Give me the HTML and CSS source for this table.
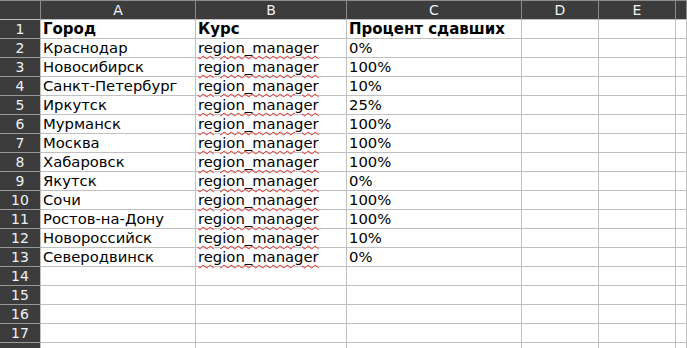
FILE: index.html
```html
<!DOCTYPE html>
<html lang="ru">
<head>
<meta charset="utf-8">
<title>Sheet</title>
<link rel="stylesheet" href="styles.css">
</head>
<body>
<div class="sheet">
  <div class="corner"></div>
  <div class="colhead">A</div>
  <div class="colhead">B</div>
  <div class="colhead">C</div>
  <div class="colhead">D</div>
  <div class="colhead">E</div>
  <div class="colhead"></div>

  <div class="rowhead">1</div><div class="cell bold">Город</div><div class="cell bold">Курс</div><div class="cell bold">Процент сдавших</div><div class="cell"></div><div class="cell"></div><div class="cell"></div>
  <div class="rowhead">2</div><div class="cell">Краснодар</div><div class="cell"><span class="spell">region_manager</span></div><div class="cell">0%</div><div class="cell"></div><div class="cell"></div><div class="cell"></div>
  <div class="rowhead">3</div><div class="cell">Новосибирск</div><div class="cell"><span class="spell">region_manager</span></div><div class="cell">100%</div><div class="cell"></div><div class="cell"></div><div class="cell"></div>
  <div class="rowhead">4</div><div class="cell">Санкт-Петербург</div><div class="cell"><span class="spell">region_manager</span></div><div class="cell">10%</div><div class="cell"></div><div class="cell"></div><div class="cell"></div>
  <div class="rowhead">5</div><div class="cell">Иркутск</div><div class="cell"><span class="spell">region_manager</span></div><div class="cell">25%</div><div class="cell"></div><div class="cell"></div><div class="cell"></div>
  <div class="rowhead">6</div><div class="cell">Мурманск</div><div class="cell"><span class="spell">region_manager</span></div><div class="cell">100%</div><div class="cell"></div><div class="cell"></div><div class="cell"></div>
  <div class="rowhead">7</div><div class="cell">Москва</div><div class="cell"><span class="spell">region_manager</span></div><div class="cell">100%</div><div class="cell"></div><div class="cell"></div><div class="cell"></div>
  <div class="rowhead">8</div><div class="cell">Хабаровск</div><div class="cell"><span class="spell">region_manager</span></div><div class="cell">100%</div><div class="cell"></div><div class="cell"></div><div class="cell"></div>
  <div class="rowhead">9</div><div class="cell">Якутск</div><div class="cell"><span class="spell">region_manager</span></div><div class="cell">0%</div><div class="cell"></div><div class="cell"></div><div class="cell"></div>
  <div class="rowhead">10</div><div class="cell">Сочи</div><div class="cell"><span class="spell">region_manager</span></div><div class="cell">100%</div><div class="cell"></div><div class="cell"></div><div class="cell"></div>
  <div class="rowhead">11</div><div class="cell">Ростов-на-Дону</div><div class="cell"><span class="spell">region_manager</span></div><div class="cell">100%</div><div class="cell"></div><div class="cell"></div><div class="cell"></div>
  <div class="rowhead">12</div><div class="cell">Новороссийск</div><div class="cell"><span class="spell">region_manager</span></div><div class="cell">10%</div><div class="cell"></div><div class="cell"></div><div class="cell"></div>
  <div class="rowhead">13</div><div class="cell">Северодвинск</div><div class="cell"><span class="spell">region_manager</span></div><div class="cell">0%</div><div class="cell"></div><div class="cell"></div><div class="cell"></div>
  <div class="rowhead">14</div><div class="cell"></div><div class="cell"></div><div class="cell"></div><div class="cell"></div><div class="cell"></div><div class="cell"></div>
  <div class="rowhead">15</div><div class="cell"></div><div class="cell"></div><div class="cell"></div><div class="cell"></div><div class="cell"></div><div class="cell"></div>
  <div class="rowhead">16</div><div class="cell"></div><div class="cell"></div><div class="cell"></div><div class="cell"></div><div class="cell"></div><div class="cell"></div>
  <div class="rowhead">17</div><div class="cell"></div><div class="cell"></div><div class="cell"></div><div class="cell"></div><div class="cell"></div><div class="cell"></div>
  <div class="rowhead"></div><div class="cell"></div><div class="cell"></div><div class="cell"></div><div class="cell"></div><div class="cell"></div><div class="cell"></div>
</div>
</body>
</html>
```
FILE: styles.css
```css
html, body {
  margin: 0;
  padding: 0;
  background: #ffffff;
  overflow: hidden;
}
.sheet {
  display: grid;
  grid-template-columns: 41px 155px 151px 175px 77px 77px 1fr;
  grid-template-rows: 20px;
  grid-auto-rows: 19px;
  font-family: "DejaVu Sans", sans-serif;
  font-size: 14.8px;
  width: 687px;
}
.corner, .colhead, .rowhead, .cell {
  box-sizing: border-box;
  border-right: 1px solid #c0c0c0;
  border-bottom: 1px solid #c0c0c0;
  white-space: nowrap;
  overflow: hidden;
}
.corner, .colhead, .rowhead {
  background: #3c3c3c;
  color: #eef2f6;
  font-size: 14px;
  text-align: center;
}
.corner, .colhead {
  border-right-color: #8c8c8c;
  border-top: 1px solid #8c8c8c;
  line-height: 18px;
}
.colhead:last-child {
  border-right: none;
}
.rowhead {
  line-height: 18px;
  border-bottom-color: #9a9a9a;
  border-right-color: #c0c0c0;
}
.cell {
  color: #000000;
  padding-left: 2px;
  line-height: 18px;
  overflow: visible;
}
.bold {
  font-weight: bold;
  font-size: 15px;
}
.spell {
  text-decoration: underline wavy #e8281f;
  text-decoration-thickness: 1px;
  text-underline-offset: 2px;
}
```
